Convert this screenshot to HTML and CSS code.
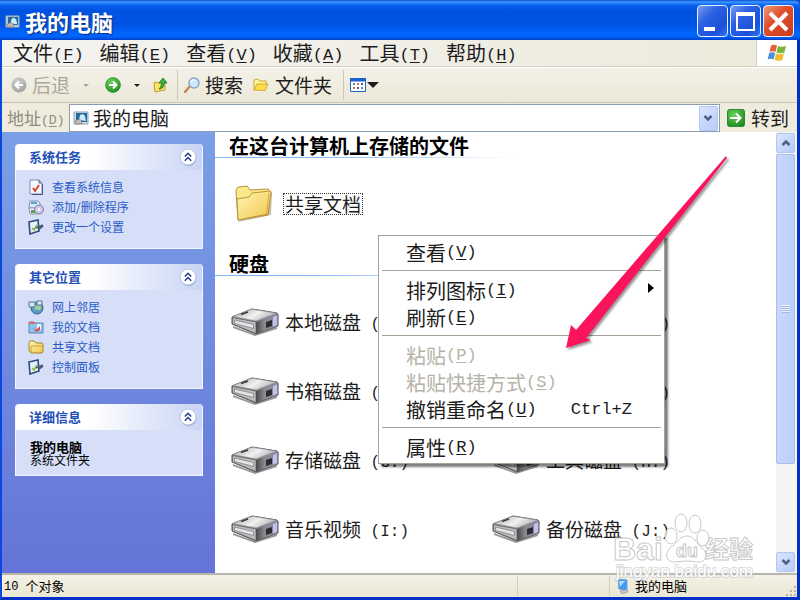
FILE: index.html
```
<!DOCTYPE html>
<html lang="zh-CN">
<head>
    <meta charset="UTF-8">
    <meta name="viewport" content="width=device-width, initial-scale=1.0">
    <title>我的电脑</title>
    <link rel="stylesheet" href="styles.css">
</head>
<body>
    <!-- Icones -->
    <svg class="sprite" aria-hidden="true">
        <defs>
            <linearGradient id="g-folder" x1="0" y1="0" x2="1" y2="1">
                <stop offset="0" stop-color="#fff8b8"/>
                <stop offset="1" stop-color="#f2c34a"/>
            </linearGradient>
            <linearGradient id="g-top" x1="0" y1="0" x2="1" y2="0.4">
                <stop offset="0" stop-color="#a4a4a6"/>
                <stop offset="0.6" stop-color="#f2f2f2"/>
                <stop offset="1" stop-color="#b4b4b8"/>
            </linearGradient>
            <linearGradient id="g-side" x1="0" y1="0" x2="1" y2="0">
                <stop offset="0" stop-color="#4a4a4c"/>
                <stop offset="0.4" stop-color="#8b8b8e"/>
                <stop offset="1" stop-color="#8a86ac"/>
            </linearGradient>
            <radialGradient id="g-green" cx="0.4" cy="0.3" r="0.8">
                <stop offset="0" stop-color="#6cd05c"/>
                <stop offset="1" stop-color="#158a1c"/>
            </radialGradient>
            <radialGradient id="g-gray" cx="0.4" cy="0.3" r="0.8">
                <stop offset="0" stop-color="#d0d0ce"/>
                <stop offset="1" stop-color="#9c9c9a"/>
            </radialGradient>
        </defs>
        <symbol id="i-computer" viewBox="0 0 16 16">
            <path d="M1 2h14v12H1z" fill="#d9dde6" stroke="#8d9fb9"/>
            <path d="M3 3h11v9H3z" fill="#1f6a9c"/>
            <path d="M6 10l1-5 3-1 2 2 1 5z" fill="#c8ecfc"/>
            <path d="M2 11l4-2 3 2v3H3z" fill="#c8b8ae" stroke="#7a6a64" stroke-width="0.6"/>
        </symbol>
        <symbol id="i-back" viewBox="0 0 16 16">
            <circle cx="8" cy="8" r="7.5" fill="url(#g-gray)"/>
            <path d="M12 8H5M8 4.5L4.500 8 8 11.500" fill="none" stroke="#fff" stroke-width="2"/>
        </symbol>
        <symbol id="i-forward" viewBox="0 0 16 16">
            <circle cx="8" cy="8" r="7.500" fill="url(#g-green)" stroke="#2b8f2a" stroke-width="0.6"/>
            <path d="M4 8h7M8 4.500L11.500 8 8 11.500" fill="none" stroke="#fff" stroke-width="2"/>
        </symbol>
        <symbol id="i-up" viewBox="0 0 16 16">
            <path d="M1 6l2-1 2 1 7-1v8l-10 2z" fill="#fbe36c" stroke="#c49a2a"/>
            <path d="M6 12c4 0 5-3 5-6h3L10 1 6 6h2.500c0 2-.5 4-2.500 6z" fill="#3cb33a" stroke="#18701c" stroke-width="0.8"/>
        </symbol>
        <symbol id="i-search" viewBox="0 0 16 16">
            <path d="M1 15l5-6" stroke="#c08a5c" stroke-width="2.500" stroke-linecap="round"/>
            <circle cx="10" cy="6" r="5" fill="#cfeafc" stroke="#8aa4c8" stroke-width="1.400"/>
            <path d="M7 5a3 3 0 0 1 3-2" stroke="#fff" stroke-width="1.500" fill="none"/>
        </symbol>
        <symbol id="i-folders" viewBox="0 0 16 16">
            <path d="M1 13V3l4-1 2 2h6v3" fill="#fff3a0" stroke="#d8a528"/>
            <path d="M1 13l3-6h11l-3 6.500z" fill="#fddf50" stroke="#d8a528" stroke-linejoin="round"/>
        </symbol>
        <symbol id="i-views" viewBox="0 0 16 14">
            <path d="M.5.5h15v13H.5z" fill="#fff" stroke="#2468c0"/>
            <path d="M0 0h16v3.500H0z" fill="#1b62d0"/>
            <path d="M3 5h2v2H3zM11 9h2v2h-2z" fill="#6a86b8"/>
            <path d="M7 5h2v2H7zM3 9h2v2H3z" fill="#c0806a"/>
            <path d="M11 5h2v2h-2zM7 9h2v2H7z" fill="#4a5aa0"/>
        </symbol>
        <symbol id="i-go" viewBox="0 0 18 18">
            <rect x="0.500" y="0.500" width="17" height="17" rx="2" fill="url(#g-green)" stroke="#2a8a34"/>
            <path d="M3 9h10M9 4.500L13.500 9 9 13.500" fill="none" stroke="#fff" stroke-width="2"/>
        </symbol>
        <symbol id="i-flag" viewBox="0 0 20 18">
            <path d="M4 1.500c2-1.200 4-1 6 0L8.500 8c-2-1-4-1-6 0z" fill="#e8603a"/>
            <path d="M11 2c2 1 5 1 8 0l-1.600 6.500c-3 1-6 1-8 0z" fill="#78b83a"/>
            <path d="M2.200 9c2-1 4-1 6 0l-1.600 6.500c-2-1-4-1-6 0z" fill="#4a90dc"/>
            <path d="M9 9.500c2 1 5 1 8 0L15.500 16c-3 1.200-6 1-8 0z" fill="#f4bc30"/>
        </symbol>
        <symbol id="i-info" viewBox="0 0 16 16">
            <path d="M2 1h9l3 3v11H2z" fill="#f6f8ff" stroke="#7a8cb4"/>
            <path d="M11 1v3h3M14.500 5v10.500H4" fill="none" stroke="#46587e"/>
            <path d="M5 9l2 3 4-6" fill="none" stroke="#e0482c" stroke-width="2"/>
        </symbol>
        <symbol id="i-programs" viewBox="0 0 16 16">
            <path d="M2 2h8l2 2v5H1z" fill="#dfe9f4" stroke="#7f93b0"/>
            <path d="M3 4h6" stroke="#58a0d8" stroke-width="2"/>
            <path d="M1 9h8v6H2z" fill="#f4f4f4" stroke="#8a94a4"/>
            <path d="M3 11h4v3H3z" fill="#48a848"/>
            <circle cx="11" cy="10.500" r="4.500" fill="#cfc6ea" stroke="#7c7ca0"/>
            <circle cx="11" cy="10.500" r="1.300" fill="#fff"/>
        </symbol>
        <symbol id="i-settings" viewBox="0 0 16 16">
            <path d="M1 3l9-2 1 11-9 3z" fill="#e8f2fc" stroke="#2c4a80" stroke-width="1.600"/>
            <path d="M4 9l2 2 3-5" fill="none" stroke="#86b83a" stroke-width="1.500"/>
            <path d="M8 9l7-3M11 10l4-3" stroke="#4a5c7c" stroke-width="1.600"/>
        </symbol>
        <symbol id="i-network" viewBox="0 0 16 16">
            <circle cx="9" cy="9" r="6" fill="#5a9cc8" stroke="#34608a"/>
            <path d="M5 7c2-3 4 1 6-2 2 1 3 4 1 6-3 1-3-2-5 0z" fill="#9fd0a0"/>
            <path d="M1 3h6v5H1z" fill="#c9e8f6" stroke="#55728c"/>
            <path d="M9 2h5v4H9z" fill="#d8ecf8" stroke="#55728c"/>
        </symbol>
        <symbol id="i-docs" viewBox="0 0 16 16">
            <path d="M1 3h5l1 1h8v10H1z" fill="#8cc4f0" stroke="#5a86b8"/>
            <path d="M1 3h5l1 2H1z" fill="#e06a58"/>
            <path d="M9 5h4v6l-2-1-2 1z" fill="#f4f8ff"/>
            <path d="M5 9l3 2 4-4v4l-4 2z" fill="#dc4a48"/>
        </symbol>
        <symbol id="i-folder-small" viewBox="0 0 16 16">
            <path d="M1 4l1-2h4l2 2h6l1 1v8l-1 1H3l-2-2z" fill="url(#g-folder)" stroke="#a8842c"/>
            <path d="M3 14V7h12" fill="none" stroke="#c8a038"/>
        </symbol>
        <symbol id="i-folder" viewBox="0 0 38 38">
            <path d="M3 37l33-7 1-23-3 0" fill="#8c7c58" opacity="0.5"/>
            <path d="M1 7c0-3 1-5 3-5l8-1 3 4 18-1 2 2-2 24L3 35z" fill="#fbe88a" stroke="#b89438"/>
            <path d="M2 14l12-2 3-4 18-2c1 0 1 1 1 2l-3 21L3 35z" fill="url(#g-folder)" stroke="#b89438"/>
            <path d="M34 8l-2.500 21" stroke="#e2a848" fill="none"/>
        </symbol>
        <symbol id="i-drive" viewBox="0 0 48 28">
            <path d="M2 18l22 8 22-7v2L24 28 2 20z" fill="#555" opacity="0.6"/>
            <path d="M1 9L21 1l25 4c1 1 1.500 2 1 4v9L25 26 1 16z" fill="#8c8c90" stroke="#505054"/>
            <path d="M1.500 8.500L21 1.200l25 4L25 13z" fill="url(#g-top)" stroke="#8e8e92" stroke-width="0.700"/>
            <path d="M1.500 9.500L25 14v11.500L1.500 16z" fill="#bcbcbe" stroke="#5c5c60" stroke-width="0.700"/>
            <path d="M3.500 12l19 4.500v4l-19-5z" fill="#e4e4e6" stroke="#78787c" stroke-width="0.700"/>
            <path d="M25 14l21.500-8v12L25 25.500z" fill="url(#g-side)"/>
            <path d="M35 14l6-2v6l-6 2z" fill="#2b2b30"/>
            <path d="M42 9l4-1.500v9.500l-4 1.500z" fill="#c4c0e8"/>
            <path d="M10 6.500l7-2.500" stroke="#3a3a3c" stroke-width="1.800"/>
        </symbol>
        <symbol id="i-monitor" viewBox="0 0 12 16">
            <path d="M1 1l9 1v10l-8-1z" fill="#3f9cf0" stroke="#7a9acc"/>
            <path d="M2 3l6 0-5 6z" fill="#a8dcff"/>
            <path d="M3 13l7-1 1 2-6 2z" fill="#c8ccd8" stroke="#7c8498" stroke-width="0.600"/>
        </symbol>
        <symbol id="i-collapse" viewBox="0 0 17 17">
            <circle cx="9" cy="9.500" r="7.500" fill="#8890b8" opacity="0.6"/>
            <circle cx="8.500" cy="8.500" r="7.500" fill="#fff" stroke="#b8bfdc" stroke-width="0.800"/>
            <path d="M5.500 8l3-3 3 3M5.500 12l3-3 3 3" fill="none" stroke="#233f8c" stroke-width="1.500"/>
        </symbol>
        <symbol id="i-chevron" viewBox="0 0 10 8">
            <path d="M1.500 2L5 5.500 8.500 2" fill="none" stroke="#4d6185" stroke-width="2.500"/>
        </symbol>
        <symbol id="i-caret" viewBox="0 0 10 5">
            <path d="M0 0h10L5 5z" fill="currentColor"/>
        </symbol>
    </svg>

    <div class="window">
        <header class="titlebar">
            <svg class="icon-title"><use href="#i-computer"/></svg>
            <h1>我的电脑</h1>
            <button class="win-btn" aria-label="最小化"><svg viewBox="0 0 29 30"><path d="M6 21h11v4H6z" fill="#fff"/></svg></button>
            <button class="win-btn" aria-label="最大化"><svg viewBox="0 0 29 30"><path d="M5 6h19v19H5zM7 10v13h15V10z" fill="#fff" fill-rule="evenodd"/></svg></button>
            <button class="win-btn close" aria-label="关闭"><svg viewBox="0 0 29 30"><path d="M6 7l17 17M23 7L6 24" stroke="#fff" stroke-width="4"/></svg></button>
        </header>

        <div class="frame">
            <nav class="menubar">
                <button>文件<span class="key">(<u>F</u>)</span></button>
                <button>编辑<span class="key">(<u>E</u>)</span></button>
                <button>查看<span class="key">(<u>V</u>)</span></button>
                <button>收藏<span class="key">(<u>A</u>)</span></button>
                <button>工具<span class="key">(<u>T</u>)</span></button>
                <button>帮助<span class="key">(<u>H</u>)</span></button>
                <div class="flag"><svg><use href="#i-flag"/></svg></div>
            </nav>

            <div class="toolbar">
                <button class="disabled" disabled><svg class="icon"><use href="#i-back"/></svg>后退<svg class="caret"><use href="#i-caret"/></svg></button>
                <button class="forward" aria-label="前进"><svg class="icon"><use href="#i-forward"/></svg><svg class="caret"><use href="#i-caret"/></svg></button>
                <button aria-label="向上"><svg class="icon"><use href="#i-up"/></svg></button>
                <span class="divider"></span>
                <button><svg class="icon"><use href="#i-search"/></svg>搜索</button>
                <button class="folders"><svg class="icon"><use href="#i-folders"/></svg>文件夹</button>
                <span class="divider"></span>
                <button class="views" aria-label="视图"><svg class="icon"><use href="#i-views"/></svg><svg class="caret-big"><use href="#i-caret"/></svg></button>
            </div>

            <div class="addressbar">
                <label for="address">地址<span class="key">(<u>D</u>)</span></label>
                <div class="address-box">
                    <svg class="icon"><use href="#i-computer"/></svg>
                    <input id="address" type="text" value="我的电脑">
                    <button class="blue-btn" aria-label="下拉"><svg><use href="#i-chevron"/></svg></button>
                </div>
                <button class="go"><svg><use href="#i-go"/></svg>转到</button>
            </div>

            <div class="main">
                <aside class="sidebar">
                    <section class="panel">
                        <div class="panel-head">
                            <h2>系统任务</h2>
                            <button aria-label="折叠"><svg><use href="#i-collapse"/></svg></button>
                        </div>
                        <ul>
                            <li><a href="#"><svg class="icon"><use href="#i-info"/></svg>查看系统信息</a></li>
                            <li><a href="#"><svg class="icon"><use href="#i-programs"/></svg>添加/删除程序</a></li>
                            <li><a href="#"><svg class="icon"><use href="#i-settings"/></svg>更改一个设置</a></li>
                        </ul>
                    </section>
                    <section class="panel">
                        <div class="panel-head">
                            <h2>其它位置</h2>
                            <button aria-label="折叠"><svg><use href="#i-collapse"/></svg></button>
                        </div>
                        <ul>
                            <li><a href="#"><svg class="icon"><use href="#i-network"/></svg>网上邻居</a></li>
                            <li><a href="#"><svg class="icon"><use href="#i-docs"/></svg>我的文档</a></li>
                            <li><a href="#"><svg class="icon"><use href="#i-folder-small"/></svg>共享文档</a></li>
                            <li><a href="#"><svg class="icon"><use href="#i-settings"/></svg>控制面板</a></li>
                        </ul>
                    </section>
                    <section class="panel">
                        <div class="panel-head">
                            <h2>详细信息</h2>
                            <button aria-label="折叠"><svg><use href="#i-collapse"/></svg></button>
                        </div>
                        <div class="details">
                            <strong>我的电脑</strong>
                            <p>系统文件夹</p>
                        </div>
                    </section>
                </aside>

                <main class="content">
                    <h2>在这台计算机上存储的文件</h2>
                    <div class="folder-row">
                        <svg><use href="#i-folder"/></svg>
                        <span class="selected">共享文档</span>
                    </div>
                    <h2>硬盘</h2>
                    <div class="drives">
                        <div class="drive"><svg><use href="#i-drive"/></svg><span>本地磁盘<span class="key"> (C:)</span></span></div>
                        <div class="drive"><svg><use href="#i-drive"/></svg><span>软件磁盘<span class="key"> (D:)</span></span></div>
                        <div class="drive"><svg><use href="#i-drive"/></svg><span>书箱磁盘<span class="key"> (E:)</span></span></div>
                        <div class="drive"><svg><use href="#i-drive"/></svg><span>游戏磁盘<span class="key"> (F:)</span></span></div>
                        <div class="drive"><svg><use href="#i-drive"/></svg><span>存储磁盘<span class="key"> (G:)</span></span></div>
                        <div class="drive"><svg><use href="#i-drive"/></svg><span>工具磁盘<span class="key"> (H:)</span></span></div>
                        <div class="drive"><svg><use href="#i-drive"/></svg><span>音乐视频<span class="key"> (I:)</span></span></div>
                        <div class="drive"><svg><use href="#i-drive"/></svg><span>备份磁盘<span class="key"> (J:)</span></span></div>
                    </div>
                </main>

                <div class="scrollbar">
                    <button class="blue-btn up" aria-label="向上滚动"><svg><use href="#i-chevron"/></svg></button>
                    <div class="track"><div class="thumb"><i></i></div></div>
                    <button class="blue-btn" aria-label="向下滚动"><svg><use href="#i-chevron"/></svg></button>
                </div>
            </div>

            <footer class="statusbar">
                <span class="cell count"><span class="key">10 </span>个对象</span>
                <span class="cell empty"></span>
                <span class="cell place"><svg><use href="#i-monitor"/></svg>我的电脑</span>
                <svg class="resize" viewBox="0 0 12 12"><path d="M9 1h2v2H9zM5 5h2v2H5zM9 5h2v2H9zM1 9h2v2H1zM5 9h2v2H5zM9 9h2v2H9z" fill="#b8b4a0"/></svg>
            </footer>
        </div>

        <!-- Menu contextuel -->
        <div class="context-menu">
            <button>查看<span class="key">(<u>V</u>)</span></button>
            <hr>
            <button>排列图标<span class="key">(<u>I</u>)</span><svg class="submenu" viewBox="0 0 6 10"><path d="M0 0l6 5-6 5z"/></svg></button>
            <button>刷新<span class="key">(<u>E</u>)</span></button>
            <hr>
            <button disabled>粘贴<span class="key">(<u>P</u>)</span></button>
            <button disabled>粘贴快捷方式<span class="key">(<u>S</u>)</span></button>
            <button>撤销重命名<span class="key">(<u>U</u>)</span><span class="key shortcut">Ctrl+Z</span></button>
            <hr>
            <button>属性<span class="key">(<u>R</u>)</span></button>
        </div>

        <svg class="arrow" viewBox="0 0 170 200">
            <path d="M166 3L167 5 27 184 26 185 31 187 6 195 11 172 16 177z" fill="#fa145c"/>
        </svg>

        <svg class="watermark" viewBox="0 0 150 70">
            <g fill="#fff" fill-opacity="0.8" stroke="#c9c9c9">
                <ellipse cx="61" cy="24" rx="6" ry="8"/>
                <ellipse cx="71" cy="11" rx="6" ry="9"/>
                <ellipse cx="85" cy="12" rx="6" ry="9"/>
                <ellipse cx="93" cy="26" rx="6" ry="8"/>
                <path d="M77 24c8 0 9 8 15 12 6 5 5 14-3 14-5 0-8-1-12-1s-9 1-14 1c-8-1-8-10-2-15 6-3 8-11 16-11z"/>
                <text x="3" y="48" class="wm-logo">Bai</text>
                <text x="66" y="45" class="wm-du">du</text>
                <text x="95" y="46" class="wm-cn">经验</text>
            </g>
            <text x="6" y="65" class="wm-url">jingyan.baidu.com</text>
        </svg>
    </div>
</body>
</html>
```

FILE: styles.css
```
:root {
    --beige: #efecdd;
    --line: #d6d2c2;
    --link: #2a5cc8;
    --header-blue: #1f50b8;
    --field-border: #8b9db5;
}

* {
    margin: 0;
    padding: 0;
    box-sizing: border-box;
}

body {
    font-family: "Noto Sans CJK SC", sans-serif;
    color: #1c1c1c;
    background: #0a3fd0;
}

button {
    font: inherit;
    color: inherit;
    background: none;
    border: none;
    white-space: nowrap;
}

u {
    text-decoration-thickness: 1px;
    text-underline-offset: 2px;
}

ul {
    list-style: none;
}

/* Lettres latines a chasse fixe */
.key {
    font-family: "Liberation Mono", monospace;
    line-height: 1;
    vertical-align: 1px;
    white-space: pre;
}

.sprite {
    position: absolute;
    width: 0;
    height: 0;
}

.icon {
    width: 16px;
    height: 16px;
    flex: none;
}

.window {
    position: relative;
    display: flex;
    flex-direction: column;
    height: 100vh;
    min-height: 600px;
    overflow: hidden;
}

/* Barre de titre */
.titlebar {
    display: flex;
    align-items: center;
    gap: 2px;
    height: 40px;
    padding: 2px 6px 0 5px;
    background: linear-gradient(#0a4fd0 0, #3c98ff 2px, #0a62ee 5px, #0053e0 10px, #0054e4 24px, #0066ff 34px, #0060f8 37px, #0040c8 40px);
    border-radius: 0 6px 0 0;
}

.icon-title {
    width: 15px;
    height: 15px;
}

.titlebar h1 {
    flex: 1;
    padding-left: 3px;
    font-size: 22px;
    line-height: 28px;
    color: #fff;
    text-shadow: 1px 1px 1px #0a2a80;
}

.win-btn {
    width: 31px;
    height: 32px;
    border: 1px solid #e8f0ff;
    border-radius: 4px;
    background: linear-gradient(135deg, #7a9cf0, #2c62e4 35%, #1c50d8 75%, #2f74f4);
}

.win-btn svg {
    display: block;
    width: 29px;
    height: 30px;
}

.win-btn.close {
    background: linear-gradient(135deg, #f09a80, #e0502c 40%, #c83a18);
}

.frame {
    flex: 1;
    display: flex;
    flex-direction: column;
    min-height: 0;
    border: solid #0a48e0;
    border-width: 0 3px 3px 2px;
    border-right-color: #0030c8;
    border-bottom-color: #0030c8;
    background: var(--beige);
}

/* Menu */
.menubar {
    display: flex;
    gap: 16px;
    height: 27px;
    padding-left: 11px;
    border-bottom: 1px solid var(--line);
    background: linear-gradient(90deg, #f4f3f0, #edeadb);
    font-size: 20px;
    line-height: 26px;
}

.menubar .key,
.context-menu .key {
    font-size: 17px;
}

.flag {
    display: flex;
    align-items: center;
    justify-content: center;
    width: 41px;
    margin-left: auto;
    border-left: 1px solid var(--line);
    background: #fff;
}

.flag svg {
    width: 20px;
    height: 18px;
}

/* Barre d'outils */
.toolbar {
    display: flex;
    align-items: center;
    height: 36px;
    padding-left: 9px;
    border-top: 1px solid #fff;
    border-bottom: 1px solid #c6c3b6;
    background: linear-gradient(#f3f1e8, #ece8d8);
    font-size: 19px;
    line-height: 28px;
}

.toolbar button {
    display: flex;
    align-items: center;
    gap: 5px;
}

.toolbar .disabled {
    color: #a9a79c;
}

.caret {
    width: 6px;
    height: 3px;
    margin-left: 8px;
}

.forward {
    margin: 0 13px 0 16px;
}

.divider {
    width: 1px;
    height: 30px;
    margin: 0 6px 0 8px;
    background: #cbc8b8;
}

.toolbar .folders {
    gap: 6px;
    margin: 0 3px 0 10px;
}

.toolbar .views {
    gap: 1px;
}

.views .icon {
    height: 14px;
}

.caret-big {
    width: 12px;
    height: 6px;
}

/* Adresse */
.addressbar {
    display: flex;
    align-items: center;
    height: 29px;
    padding: 1px 8px 0 5px;
    font-size: 19px;
    line-height: 26px;
}

.addressbar label {
    width: 62px;
    font-size: 17px;
    color: #8d8b80;
    white-space: nowrap;
}

.addressbar .key {
    font-size: 13px;
}

.address-box {
    flex: 1;
    display: flex;
    align-items: center;
    height: 28px;
    padding: 0 1px 0 3px;
    border: 1px solid var(--field-border);
    background: #fff;
}

.address-box input {
    flex: 1;
    min-width: 0;
    height: 26px;
    padding-left: 4px;
    border: none;
    outline: none;
    background: none;
    font: inherit;
    color: inherit;
}

.blue-btn {
    display: flex;
    align-items: center;
    justify-content: center;
    width: 19px;
    height: 25px;
    border: 1px solid #b4c6f4;
    border-radius: 2px;
    background: linear-gradient(135deg, #dbe5fe, #b6cafa);
}

.blue-btn svg {
    width: 10px;
    height: 8px;
}

.go {
    display: flex;
    align-items: center;
    gap: 6px;
    margin-left: 7px;
}

.go svg {
    width: 18px;
    height: 18px;
}

/* Zone principale */
.main {
    flex: 1;
    display: flex;
    min-height: 0;
    background: #fff;
}

.sidebar {
    width: 213px;
    flex: none;
    padding: 12px 12px 0 13px;
    background: linear-gradient(#7ba0e6, #6474d8);
}

.panel {
    margin-bottom: 15px;
    border: 1px solid #f4f7ff;
    border-top: none;
    border-radius: 4px 4px 0 0;
    background: #d6dff7;
}

.panel-head {
    display: flex;
    align-items: center;
    justify-content: space-between;
    height: 26px;
    padding: 0 5px 0 13px;
    border-radius: 4px 4px 0 0;
    background: linear-gradient(90deg, #fff 40%, #c8d4f6);
}

.panel-head h2 {
    font-size: 13px;
    line-height: 20px;
    color: var(--header-blue);
}

.panel-head svg {
    display: block;
    width: 18px;
    height: 18px;
}

.panel ul {
    padding: 7px 12px 11px;
    font-size: 12px;
    line-height: 20px;
}

.panel li a {
    display: flex;
    align-items: center;
    gap: 8px;
    height: 20px;
    color: var(--link);
    text-decoration: none;
}

.details {
    padding: 10px 14px 9px;
    font-size: 12px;
    line-height: 13px;
    color: #000;
}

.details strong {
    display: block;
    font-size: 13px;
}

.content {
    flex: 1;
    min-width: 0;
    overflow: hidden;
    font-size: 19px;
    line-height: 22px;
}

.content h2 {
    height: 26px;
    padding: 1px 0 0 14px;
    font-size: 20px;
    line-height: 25px;
    color: #000;
    background: linear-gradient(90deg, #84b6fa 100px, #fff 300px) bottom / 100% 1px no-repeat;
}

.content .key {
    font-size: 16px;
}

.folder-row {
    display: flex;
    align-items: center;
    gap: 10px;
    height: 92px;
    padding-left: 20px;
}

.folder-row svg {
    width: 38px;
    height: 38px;
}

.selected {
    padding: 0 1px;
    border: 1px dotted #333;
    line-height: 20px;
}

.drives {
    display: grid;
    grid-template-columns: 261px 261px;
    grid-auto-rows: 69px;
    padding: 11px 0 0 16px;
}

.drive {
    display: flex;
    align-items: center;
    gap: 6px;
}

.drive svg {
    width: 48px;
    height: 28px;
}

/* Barre de defilement */
.scrollbar {
    display: flex;
    flex-direction: column;
    width: 21px;
    padding: 1px 2px 1px 0;
    background: #f5f4f0;
}

.scrollbar .blue-btn {
    height: 20px;
}

.up svg {
    transform: rotate(180deg);
}

.track {
    flex: 1;
    padding-top: 1px;
}

.thumb {
    display: flex;
    align-items: center;
    justify-content: center;
    width: 19px;
    height: 78%;
    border: 1px solid #a9bdf0;
    border-radius: 2px;
    background: linear-gradient(90deg, #cad8fd, #bccefa);
}

.thumb i {
    width: 8px;
    height: 8px;
    background: repeating-linear-gradient(#eef4fe 0 1px, #a4b8e8 1px 2px);
}

/* Barre d'etat */
.statusbar {
    display: flex;
    align-items: center;
    height: 24px;
    border-top: 2px solid #b9b7ac;
    background: linear-gradient(#f3f1e6, #ebe7d4);
    font-size: 13px;
    line-height: 20px;
    color: #000;
}

.statusbar .key {
    font-size: 12px;
}

.cell {
    height: 20px;
    border-right: 1px solid #d2cfbf;
}

.count {
    flex: 1;
    padding-left: 2px;
}

.empty {
    width: 92px;
}

.place {
    display: flex;
    align-items: center;
    gap: 6px;
    width: 175px;
    padding-left: 7px;
    border: none;
}

.place svg {
    width: 12px;
    height: 16px;
}

.resize {
    align-self: flex-end;
    width: 12px;
    height: 12px;
}

/* Menu contextuel */
.context-menu {
    position: absolute;
    left: 378px;
    top: 235px;
    width: 287px;
    padding: 3px 2px 2px;
    border: 1px solid #a5a396;
    background: #fff;
    box-shadow: 3px 3px 2px rgba(0, 0, 0, 0.5);
    font-size: 20px;
    line-height: 27px;
}

.context-menu button {
    display: flex;
    align-items: center;
    width: 100%;
    height: 27px;
    padding: 0 30px 0 25px;
}

.context-menu button:disabled {
    color: #b5b3a8;
}

.context-menu hr {
    height: 1px;
    margin: 4px 1px 6px;
    border: none;
    background: #a5a396;
}

.shortcut {
    margin-left: auto;
}

.submenu {
    width: 6px;
    height: 10px;
    margin: 0 -22px 6px auto;
}

.arrow {
    position: absolute;
    left: 560px;
    top: 153px;
    width: 170px;
    height: 200px;
    filter: drop-shadow(2px 2px 1px rgba(0, 0, 0, 0.4));
    pointer-events: none;
}

.watermark {
    position: absolute;
    left: 610px;
    top: 512px;
    width: 150px;
    height: 70px;
    pointer-events: none;
}

.wm-logo {
    font: bold 32px "Liberation Sans", sans-serif;
}

.wm-du {
    font: bold 18px "Liberation Sans", sans-serif;
}

.wm-cn {
    font: bold 24px "Noto Sans CJK SC", sans-serif;
}

.wm-url {
    font: 17px "Liberation Sans", sans-serif;
    fill: #fff;
    stroke: #c4c4c4;
    stroke-width: 2px;
    stroke-opacity: 0.6;
    paint-order: stroke;
}
```
